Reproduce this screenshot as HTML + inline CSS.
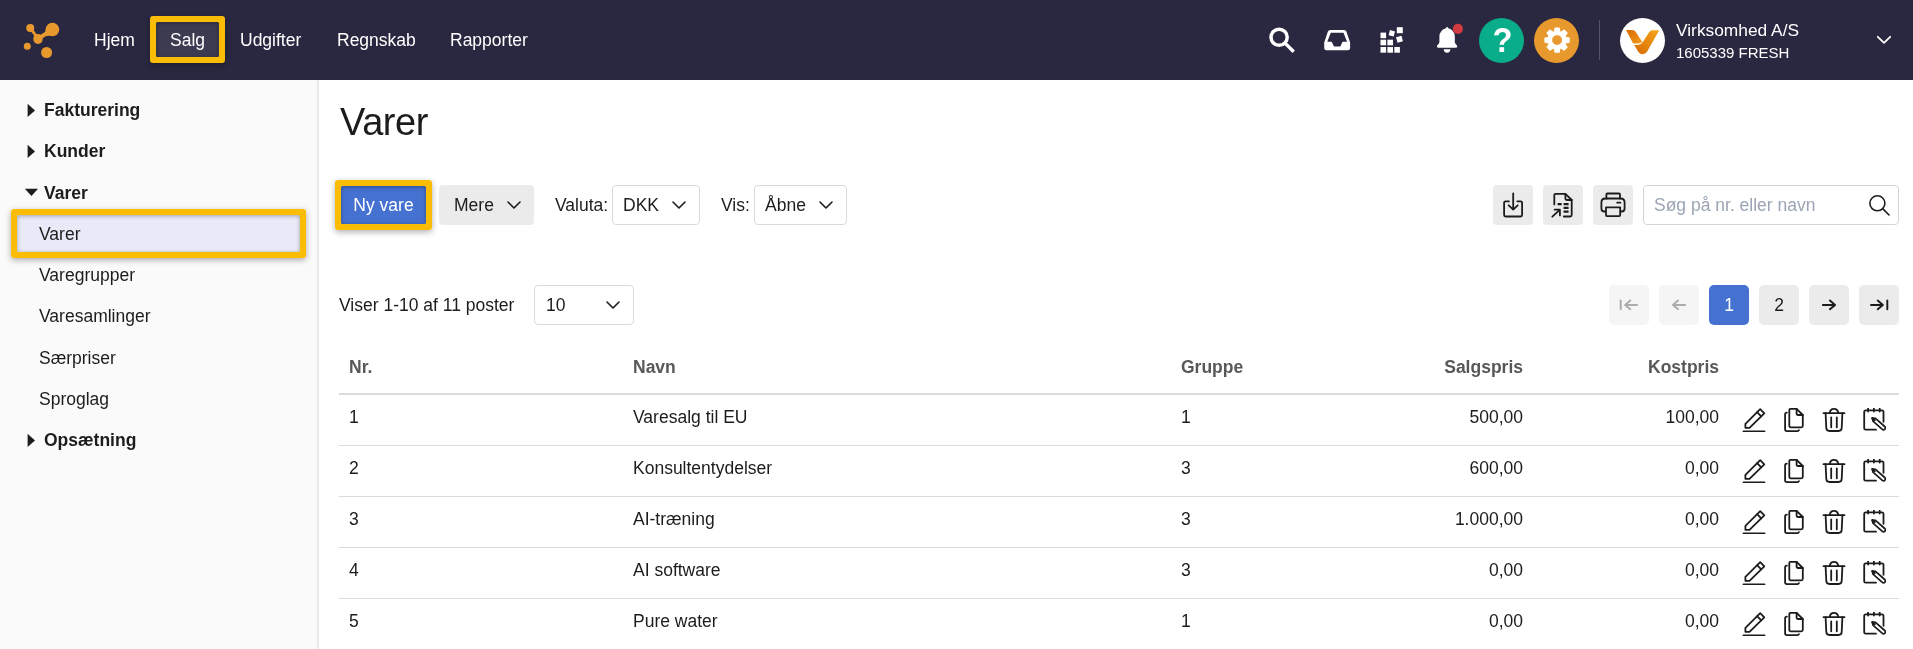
<!DOCTYPE html>
<html lang="da">
<head>
<meta charset="utf-8">
<title>Varer</title>
<style>
*{box-sizing:border-box;margin:0;padding:0}
html,body{width:1913px;height:649px;overflow:hidden;background:#fff}
body{font-family:"Liberation Sans",Arial,sans-serif;font-size:17.5px;color:#1c1c1c;position:relative}
.abs{position:absolute}
#nav{position:absolute;left:0;top:0;width:1913px;height:80px;background:#2a2840}
.navt{position:absolute;top:0;height:80px;line-height:80px;color:#fff;font-size:17.5px;white-space:nowrap}
.hl{position:absolute;border:6px solid #fbbc05;border-radius:5px;box-shadow:0 3px 8px rgba(0,0,0,.35), inset 0 1px 5px rgba(0,0,0,.3)}
#side{position:absolute;left:0;top:80px;width:319px;height:569px;background:#fafafa;border-right:2px solid #e9e9e9}
.sh{position:absolute;left:44px;font-weight:bold;font-size:17.5px;line-height:20px;white-space:nowrap}
.si{position:absolute;left:39px;font-size:17.5px;line-height:20px;white-space:nowrap}
.tri{position:absolute;width:0;height:0}
.tri.r{border-left:8px solid #1c1c1c;border-top:6.25px solid transparent;border-bottom:6.25px solid transparent}
.tri.d{border-top:7.2px solid #1c1c1c;border-left:6.7px solid transparent;border-right:6.7px solid transparent}
h1{position:absolute;left:340px;top:100px;letter-spacing:-0.4px;font-size:38px;font-weight:normal;line-height:44px}
.btn{position:absolute;height:40px;border-radius:4px;background:#ebebeb;line-height:40px;font-size:17.5px;white-space:nowrap}
.sel{position:absolute;height:40px;border-radius:4px;background:#fff;border:1px solid #d9d9d9;line-height:38px;font-size:17.5px;white-space:nowrap}
.lbl{position:absolute;line-height:40px;font-size:17.5px;white-space:nowrap}
.chev{position:absolute;width:14px;height:8px}
table{position:absolute;left:339px;top:343px;width:1560px;border-collapse:collapse;table-layout:fixed}
th{height:51px;text-align:left;font-size:17.5px;color:#585858;font-weight:bold;padding:0 10px 1px;border-bottom:2px solid #dcdcdc}
td{height:51px;font-size:17.5px;padding:0 10px 4px;border-bottom:1px solid #dcdcdc;white-space:nowrap}
.r{text-align:right}
.ic{position:absolute;width:24px;height:24px}
</style>
</head>
<body>
<div id="root" style="position:absolute;left:0;top:0;width:1913px;height:649px;will-change:transform">

<svg width="0" height="0" style="position:absolute">
<defs>
<symbol id="i-edit" viewBox="0 0 24 24"><g fill="none" stroke="#1c1c1c" stroke-width="1.800" stroke-linejoin="round" stroke-linecap="round">
<path d="M3.400 15.800 L18.200 1.200 L22.300 5.300 L7.500 19.800 H3.400 Z"/><path d="M15.100 4.200 L19.200 8.300"/><path d="M1.500 23.400 H22.500"/></g></symbol>
<symbol id="i-copy" viewBox="0 0 24 24"><g fill="none" stroke="#1c1c1c" stroke-width="1.800" stroke-linejoin="round" stroke-linecap="round">
<path d="M8.800 0.800 H14.600 L20.800 7 V17.800 Q20.800 19.300 19.300 19.300 H8.800 Q7.300 19.300 7.300 17.800 V2.300 Q7.300 0.800 8.800 0.800 Z"/><path d="M14.600 0.800 V5.500 Q14.600 7 16.100 7 H20.800"/>
<path d="M4.900 4.600 Q3.100 4.600 3.100 6.400 V21.300 Q3.100 23.100 4.900 23.100 H15.300 Q16.700 23.100 17 22.100"/></g></symbol>
<symbol id="i-trash" viewBox="0 0 24 24"><g fill="none" stroke="#1c1c1c" stroke-width="1.800" stroke-linejoin="round" stroke-linecap="round">
<path d="M1.500 5.200 H22.500"/><path d="M7.700 5.200 Q8.200 0.900 12 0.900 Q15.800 0.900 16.300 5.200"/>
<path d="M3.600 5.200 L4.300 20 Q4.500 23 7.500 23 H16.500 Q19.500 23 19.700 20 L20.400 5.200"/><path d="M9.200 9.500 V19.300 M14.800 9.500 V19.300"/></g></symbol>
<symbol id="i-note" viewBox="0 0 24 24"><g fill="none" stroke="#1c1c1c" stroke-width="1.800" stroke-linejoin="round" stroke-linecap="round">
<path d="M21.500 13.800 V3.900 Q21.500 2.400 20 2.400 H3.700 Q2.200 2.400 2.200 3.900 V20.200 Q2.200 21.700 3.700 21.700 H14"/>
<path d="M6.100 0.500 V3.600 M11.900 0.500 V3.600 M17.700 0.500 V3.600"/>
<path d="M10.300 10.100 L13.500 10.400 L22.700 18.500 A1.800 1.800 0 0 1 20.300 21.300 L11 13.200 Z" fill="#fff" stroke-width="1.700"/><path d="M10.400 10.200 L12.500 12.100" stroke-width="2.400"/></g></symbol>
</defs>
</svg>
<div id="nav">
  <svg class="abs" style="left:20px;top:18px" width="44" height="44" viewBox="20 18 44 44">
    <g fill="#e8992e">
      <circle cx="52.400" cy="29.500" r="6.800"/><circle cx="30.250" cy="28.100" r="4"/><ellipse cx="38" cy="38.900" rx="4.700" ry="5"/>
      <circle cx="27.300" cy="46.200" r="3.500"/><circle cx="46.600" cy="52.500" r="5.500"/>
      <path d="M30.250 28.100 L38 38.300" stroke="#e8992e" stroke-width="2.800" fill="none"/>
      <path d="M38 38.200 L52 30" stroke="#e8992e" stroke-width="3.600" fill="none"/>
      <path d="M33.400 33.800 Q36 35.500 40.500 35 L38 38 Z"/><path d="M41.500 35.300 L44 33.600 Q45.600 32 45.700 29.500 L50 35.900 Q46 35.400 42.800 38.300 Z"/>
    </g>
  </svg>
  <div class="navt" style="left:94px">Hjem</div>
  <div class="abs" style="left:156px;top:22px;width:63px;height:35px;background:#3d3b52;border-radius:3px"></div>
  <div class="navt" style="left:170px">Salg</div>
  <div class="abs" style="left:150px;top:16px;width:75px;height:47px"><div class="abs" style="left:0;top:0;width:75px;height:47px;border-radius:3px;box-shadow:0 2px 6px rgba(0,0,0,.32)"></div><div class="abs" style="left:6px;top:6px;width:63px;height:35px;border-radius:1.6px;box-shadow:inset 0 1px 4px rgba(0,0,0,.32)"></div><svg class="abs" style="left:0;top:0" width="75" height="47" viewBox="0 0 75 47"><path fill="#fbbc05" fill-rule="evenodd" d="M3 0 H72 A3 3 0 0 1 75 3 V44 A3 3 0 0 1 72 47 H3 A3 3 0 0 1 0 44 V3 A3 3 0 0 1 3 0 Z M7.6 6 H67.4 A1.6 1.6 0 0 1 69 7.6 V39.4 A1.6 1.6 0 0 1 67.4 41 H7.6 A1.6 1.6 0 0 1 6 39.4 V7.6 A1.6 1.6 0 0 1 7.6 6 Z"/></svg></div>
  <div class="navt" style="left:240px">Udgifter</div>
  <div class="navt" style="left:337px">Regnskab</div>
  <div class="navt" style="left:450px">Rapporter</div>

  <!-- search -->
  <svg class="abs" style="left:1266px;top:24px" width="32" height="32" viewBox="0 0 32 32" fill="none" stroke="#fff" stroke-width="3" stroke-linecap="round">
    <circle cx="13.100" cy="13.250" r="8.100" stroke-width="3.500"/><path d="M19.300 19.400 L27.700 27.800" stroke-width="3.400" stroke-linecap="butt"/>
  </svg>
  <!-- inbox -->
  <svg class="abs" style="left:1322px;top:27px" width="30" height="26" viewBox="0 0 30 26">
    <path d="M8.300 2.900 H22 Q23.800 2.900 24.400 4.500 L28.100 15.500 V21 Q28.100 23.200 25.900 23.200 H4.400 Q2.200 23.200 2.200 21 V15.500 L5.900 4.500 Q6.500 2.900 8.300 2.900 Z M8.800 5.700 L5.300 14.700 H9.700 L12 19.500 H18.300 L20.600 14.700 H25 L21.500 5.700 Z" fill="#fff" fill-rule="evenodd"/>
  </svg>
  <!-- grid -->
  <svg class="abs" style="left:1379px;top:26px" width="26" height="28" viewBox="0 0 26 28" fill="#fff">
    <rect x="1.500" y="6.600" width="5.600" height="5.600"/><rect x="1.500" y="13.700" width="5.600" height="5.600"/><rect x="1.500" y="21" width="5.600" height="5.700"/>
    <rect x="8.400" y="13.700" width="5.600" height="5.600"/><rect x="8.400" y="21" width="5.600" height="5.700"/><rect x="15.300" y="21" width="5.600" height="5.700"/>
    <rect x="17.800" y="1.200" width="6" height="6"/>
    <rect x="10.200" y="4.700" width="5.200" height="5.200" transform="rotate(15 12.800 7.300)"/>
    <rect x="17.700" y="10.500" width="5.600" height="5.600" transform="rotate(-15 20.500 13.300)"/>
  </svg>
  <!-- bell -->
  <svg class="abs" style="left:1434px;top:22px" width="34" height="34" viewBox="0 0 34 34">
    <path d="M13.100 4.800 L14.800 6.600 Q17.500 7.300 19.100 9.500 Q20.800 11.600 20.800 14.200 V20.300 Q20.900 21.800 23.200 23.700 Q23.700 25.700 21.800 25.700 H4.400 Q2.500 25.700 3 23.700 Q5.300 21.800 5.400 20.300 V14.200 Q5.400 11.600 7.100 9.500 Q8.700 7.300 11.400 6.600 Z M9.600 27.200 H16.500 Q15.900 30.800 13.050 30.800 Q10.200 30.800 9.600 27.200 Z" fill="#fff"/>
    <circle cx="23.900" cy="6.900" r="5.050" fill="#d23c40"/>
  </svg>
  <!-- help -->
  <div class="abs" style="left:1479px;top:18px;width:45px;height:45px;border-radius:50%;background:#0aad8a;color:#fff;font-weight:bold;font-size:35.500px;line-height:44px;text-align:center"><span style="display:inline-block;transform:translateX(0.700px) scaleX(0.920)">?</span></div>
  <!-- settings -->
  <div class="abs" style="left:1534px;top:18px;width:45px;height:45px;border-radius:50%;background:#e8992e"></div>
  <svg class="abs" style="left:1543px;top:27px" width="27" height="27" viewBox="-14.100 -13.100 27 27">
    <g fill="#fff">
      <g id="t"><path d="M-2.100 -12.700 H2.100 Q2.500 -12.700 2.600 -12.300 L3.300 -8.500 H-3.300 L-2.600 -12.300 Q-2.500 -12.700 -2.100 -12.700 Z"/></g>
      <use href="#t" transform="rotate(45)"/><use href="#t" transform="rotate(90)"/><use href="#t" transform="rotate(135)"/>
      <use href="#t" transform="rotate(180)"/><use href="#t" transform="rotate(225)"/><use href="#t" transform="rotate(270)"/><use href="#t" transform="rotate(315)"/>
    </g>
    <circle r="7.200" fill="none" stroke="#fff" stroke-width="4.500"/>
  </svg>
  <div class="abs" style="left:1599px;top:20px;width:1px;height:40px;background:#55536a"></div>
  <!-- avatar -->
  <div class="abs" style="left:1620px;top:18px;width:45px;height:45px;border-radius:50%;background:#fff"></div>
  <svg class="abs" style="left:1620px;top:18px" width="45" height="45" viewBox="0 0 45 45">
    <defs><linearGradient id="g1" x1="0" y1="0" x2="1" y2="1"><stop offset="0" stop-color="#d96a00"/><stop offset="1" stop-color="#f39a1a"/></linearGradient>
    <linearGradient id="g2" x1="1" y1="0" x2="0" y2="1"><stop offset="0" stop-color="#f7a51c"/><stop offset="1" stop-color="#d66a00"/></linearGradient></defs>
    <path d="M6 12 H12.500 Q14.500 12 15.600 13.800 L22.300 24 Q19 26.300 13 25.300 Z" fill="url(#g1)"/>
    <path d="M39.300 12.200 H32.500 Q30.500 12.200 29.300 14 L23.200 23.500 Q20.500 28 14 26.800 L18.600 34.300 Q20 36.200 22.700 36.200 Q25.500 36.200 27 33.800 Z" fill="url(#g2)"/>
  </svg>
  <div class="abs" style="left:1676px;top:20px;color:#fff;font-size:17.350px;line-height:20px;white-space:nowrap">Virksomhed A/S</div>
  <div class="abs" style="left:1676px;top:44px;color:#fff;font-size:15px;line-height:18px;white-space:nowrap">1605339 FRESH</div>
  <svg class="abs" style="left:1875px;top:34px" width="18" height="12" viewBox="0 0 18 12" fill="none" stroke="#fff" stroke-width="1.800" stroke-linecap="round" stroke-linejoin="round"><path d="M2.800 2.800 L9 8.800 L15.200 2.800"/></svg>
</div>

<div id="side">
  <svg class="abs" style="left:27px;top:23px" width="10" height="15" viewBox="0 0 10 15"><path d="M0.600 0.800 L8 7.400 L0.600 14 Z" fill="#1c1c1c"/></svg><div class="sh" style="top:20px">Fakturering</div>
  <svg class="abs" style="left:27px;top:64px" width="10" height="15" viewBox="0 0 10 15"><path d="M0.600 0.800 L8 7.400 L0.600 14 Z" fill="#1c1c1c"/></svg><div class="sh" style="top:61px">Kunder</div>
  <svg class="abs" style="left:24px;top:108px" width="15" height="9" viewBox="0 0 15 9"><path d="M0.850 0.700 H14.050 L7.450 8 Z" fill="#1c1c1c"/></svg><div class="sh" style="top:103px">Varer</div>
  <div class="abs" style="left:17px;top:135px;width:283px;height:37px;background:#e8ebf7"></div>
  <div class="si" style="top:144px">Varer</div>
  <div class="si" style="top:185px">Varegrupper</div>
  <div class="si" style="top:226px">Varesamlinger</div>
  <div class="si" style="top:268px">Særpriser</div>
  <div class="si" style="top:309px">Sproglag</div>
  <svg class="abs" style="left:27px;top:353px" width="10" height="15" viewBox="0 0 10 15"><path d="M0.600 0.800 L8 7.400 L0.600 14 Z" fill="#1c1c1c"/></svg><div class="sh" style="top:350px">Opsætning</div>
</div>
<div class="abs" style="left:11px;top:209px;width:295px;height:49px"><div class="abs" style="left:0;top:0;width:295px;height:49px;border-radius:3px;box-shadow:0 2px 6px rgba(0,0,0,.32)"></div><div class="abs" style="left:6px;top:6px;width:283px;height:37px;border-radius:1.6px;box-shadow:inset 0 1px 4px rgba(0,0,0,.32)"></div><svg class="abs" style="left:0;top:0" width="295" height="49" viewBox="0 0 295 49"><path fill="#fbbc05" fill-rule="evenodd" d="M3 0 H292 A3 3 0 0 1 295 3 V46 A3 3 0 0 1 292 49 H3 A3 3 0 0 1 0 46 V3 A3 3 0 0 1 3 0 Z M7.6 6 H287.4 A1.6 1.6 0 0 1 289 7.6 V41.4 A1.6 1.6 0 0 1 287.4 43 H7.6 A1.6 1.6 0 0 1 6 41.4 V7.6 A1.6 1.6 0 0 1 7.6 6 Z"/></svg></div>

<h1>Varer</h1>

<div class="btn" style="left:340px;top:185px;width:87px;background:#4571d1;color:#fff;text-align:center">Ny vare</div>
<div class="abs" style="left:335px;top:180px;width:97px;height:50px"><div class="abs" style="left:0;top:0;width:97px;height:50px;border-radius:3px;box-shadow:0 2px 6px rgba(0,0,0,.32)"></div><div class="abs" style="left:6px;top:6px;width:85px;height:38px;border-radius:1.6px;box-shadow:inset 0 1px 4px rgba(0,0,0,.32)"></div><svg class="abs" style="left:0;top:0" width="97" height="50" viewBox="0 0 97 50"><path fill="#fbbc05" fill-rule="evenodd" d="M3 0 H94 A3 3 0 0 1 97 3 V47 A3 3 0 0 1 94 50 H3 A3 3 0 0 1 0 47 V3 A3 3 0 0 1 3 0 Z M7.6 6 H89.4 A1.6 1.6 0 0 1 91 7.6 V42.4 A1.6 1.6 0 0 1 89.4 44 H7.6 A1.6 1.6 0 0 1 6 42.4 V7.6 A1.6 1.6 0 0 1 7.6 6 Z"/></svg></div>
<div class="btn" style="left:439px;top:185px;width:95px;padding-left:15px">Mere</div>
<svg class="chev" style="left:507px;top:201px" viewBox="0 0 14 8" fill="none" stroke="#1c1c1c" stroke-width="1.600" stroke-linecap="round" stroke-linejoin="round"><path d="M1 1 L7 7 L13 1"/></svg>
<div class="lbl" style="left:555px;top:185px">Valuta:</div>
<div class="sel" style="left:612px;top:185px;width:88px;padding-left:10px">DKK</div>
<svg class="chev" style="left:672px;top:201px" viewBox="0 0 14 8" fill="none" stroke="#1c1c1c" stroke-width="1.600" stroke-linecap="round" stroke-linejoin="round"><path d="M1 1 L7 7 L13 1"/></svg>
<div class="lbl" style="left:721px;top:185px">Vis:</div>
<div class="sel" style="left:754px;top:185px;width:93px;padding-left:10px">Åbne</div>
<svg class="chev" style="left:819px;top:201px" viewBox="0 0 14 8" fill="none" stroke="#1c1c1c" stroke-width="1.600" stroke-linecap="round" stroke-linejoin="round"><path d="M1 1 L7 7 L13 1"/></svg>

<div class="btn" style="left:1493px;top:185px;width:40px"></div>
<div class="btn" style="left:1543px;top:185px;width:40px"></div>
<div class="btn" style="left:1593px;top:185px;width:40px"></div>
<div class="sel" style="left:1643px;top:185px;width:256px;padding-left:10px;border-color:#d2d6dc;color:#9ba4b4">Søg på nr. eller navn</div>


<svg class="abs" style="left:1493px;top:185px" width="40" height="40" viewBox="0 0 40 40" fill="none" stroke="#1c1c1c" stroke-width="1.800" stroke-linejoin="round" stroke-linecap="round">
<path d="M16 16.300 H12.600 Q11.100 16.300 11.100 17.800 V30 Q11.100 31.500 12.600 31.500 H27.600 Q29.100 31.500 29.100 30 V17.800 Q29.100 16.300 27.600 16.300 H24.300"/>
<path d="M20.200 8.300 V24.300 M15.700 20.300 L20.200 24.600 L24.700 20.300"/></svg>
<svg class="abs" style="left:1543px;top:185px" width="40" height="40" viewBox="0 0 40 40" fill="none" stroke="#1c1c1c" stroke-width="1.800" stroke-linejoin="round" stroke-linecap="round">
<path d="M11.300 19.400 V10.300 Q11.300 8.800 12.800 8.800 H22.400 L28.700 15 V30 Q28.700 31.500 27.200 31.500 H20.800"/>
<path d="M22.400 8.800 V13.500 Q22.400 15 23.900 15 H28.700"/>
<path d="M14.600 19.200 H18.700 M20.600 19.200 H25.600 M20.600 22.900 H25.600 M20.600 26.600 H25.600" stroke-linecap="butt" stroke-width="2.200"/>
<path d="M9.300 31.700 L16.800 24.800 M11.600 24.700 H16.900 V30.400"/></svg>
<svg class="abs" style="left:1593px;top:185px" width="40" height="40" viewBox="0 0 40 40" fill="none" stroke="#1c1c1c" stroke-width="1.800" stroke-linejoin="round" stroke-linecap="round">
<path d="M12.500 26.500 H11.400 Q8.400 26.500 8.400 23.500 V17.500 Q8.400 13.500 12.400 13.500 H27.600 Q31.600 13.500 31.600 17.500 V23.500 Q31.600 26.500 28.600 26.500 H27.500"/>
<path d="M13.400 13.500 V9.500 Q13.400 8.500 14.400 8.500 H26 Q27 8.500 27 9.500 V13.500"/>
<path d="M13 22.300 H27.200 V30.100 Q27.200 31.100 26.200 31.100 H14 Q13 31.100 13 30.100 Z"/>
<path d="M24.200 17.700 H27.400"/></svg>
<svg class="abs" style="left:1863px;top:189px" width="32" height="32" viewBox="0 0 32 32" fill="none" stroke="#1c1c1c" stroke-width="1.600" stroke-linecap="round">
<circle cx="14.400" cy="14.300" r="7.500"/><path d="M19.700 19.600 L26 26"/></svg>
<div class="lbl" style="left:339px;top:285px">Viser 1-10 af 11 poster</div>
<div class="sel" style="left:534px;top:285px;width:100px;padding-left:11px">10</div>
<svg class="chev" style="left:606px;top:301px" viewBox="0 0 14 8" fill="none" stroke="#1c1c1c" stroke-width="1.600" stroke-linecap="round" stroke-linejoin="round"><path d="M1 1 L7 7 L13 1"/></svg>

<div class="btn" style="left:1609px;top:285px;width:40px;border-radius:5px;background:#f5f5f5"></div>
<div class="btn" style="left:1659px;top:285px;width:40px;border-radius:5px;background:#f5f5f5"></div>
<div class="btn" style="left:1709px;top:285px;width:40px;border-radius:5px;background:#4571d1;color:#fff;text-align:center">1</div>
<div class="btn" style="left:1759px;top:285px;width:40px;border-radius:5px;text-align:center">2</div>
<div class="btn" style="left:1809px;top:285px;width:40px;border-radius:5px"></div>
<div class="btn" style="left:1859px;top:285px;width:40px;border-radius:5px"></div>


<svg class="abs" style="left:1609px;top:285px" width="40" height="40" viewBox="0 0 40 40" fill="none" stroke="#acacac" stroke-width="2" stroke-linecap="round" stroke-linejoin="round"><path d="M11.700 15.500 V24.300 M28 19.900 H16.200 M21.300 15.600 L16.100 19.900 L21.300 24.200"/></svg>
<svg class="abs" style="left:1659px;top:285px" width="40" height="40" viewBox="0 0 40 40" fill="none" stroke="#acacac" stroke-width="2" stroke-linecap="round" stroke-linejoin="round"><path d="M26.100 19.900 H14 M19.100 15.600 L13.900 19.900 L19.100 24.200"/></svg>
<svg class="abs" style="left:1809px;top:285px" width="40" height="40" viewBox="0 0 40 40" fill="none" stroke="#1c1c1c" stroke-width="1.950" stroke-linecap="round" stroke-linejoin="round"><path d="M13.900 19.900 H26 M20.900 15.600 L26.100 19.900 L20.900 24.200"/></svg>
<svg class="abs" style="left:1859px;top:285px" width="40" height="40" viewBox="0 0 40 40" fill="none" stroke="#1c1c1c" stroke-width="1.950" stroke-linecap="round" stroke-linejoin="round"><path d="M28.300 15.500 V24.300 M12 19.900 H23.800 M18.700 15.600 L23.900 19.900 L18.700 24.200"/></svg>
<table>
<colgroup><col style="width:284px"><col style="width:548px"><col style="width:162px"><col style="width:200px"><col style="width:196px"><col style="width:170px"></colgroup>
<thead><tr><th>Nr.</th><th>Navn</th><th>Gruppe</th><th class="r">Salgspris</th><th class="r">Kostpris</th><th></th></tr></thead>
<tbody>
<tr><td>1</td><td>Varesalg til EU</td><td>1</td><td class="r">500,00</td><td class="r">100,00</td><td></td></tr>
<tr><td>2</td><td>Konsultentydelser</td><td>3</td><td class="r">600,00</td><td class="r">0,00</td><td></td></tr>
<tr><td>3</td><td>AI-træning</td><td>3</td><td class="r">1.000,00</td><td class="r">0,00</td><td></td></tr>
<tr><td>4</td><td>AI software</td><td>3</td><td class="r">0,00</td><td class="r">0,00</td><td></td></tr>
<tr><td>5</td><td>Pure water</td><td>1</td><td class="r">0,00</td><td class="r">0,00</td><td></td></tr>
</tbody>
</table>
<svg class="ic" style="left:1742px;top:408px"><use href="#i-edit"/></svg>
<svg class="ic" style="left:1782px;top:408px"><use href="#i-copy"/></svg>
<svg class="ic" style="left:1822px;top:408px"><use href="#i-trash"/></svg>
<svg class="ic" style="left:1862px;top:408px"><use href="#i-note"/></svg>
<svg class="ic" style="left:1742px;top:459px"><use href="#i-edit"/></svg>
<svg class="ic" style="left:1782px;top:459px"><use href="#i-copy"/></svg>
<svg class="ic" style="left:1822px;top:459px"><use href="#i-trash"/></svg>
<svg class="ic" style="left:1862px;top:459px"><use href="#i-note"/></svg>
<svg class="ic" style="left:1742px;top:510px"><use href="#i-edit"/></svg>
<svg class="ic" style="left:1782px;top:510px"><use href="#i-copy"/></svg>
<svg class="ic" style="left:1822px;top:510px"><use href="#i-trash"/></svg>
<svg class="ic" style="left:1862px;top:510px"><use href="#i-note"/></svg>
<svg class="ic" style="left:1742px;top:561px"><use href="#i-edit"/></svg>
<svg class="ic" style="left:1782px;top:561px"><use href="#i-copy"/></svg>
<svg class="ic" style="left:1822px;top:561px"><use href="#i-trash"/></svg>
<svg class="ic" style="left:1862px;top:561px"><use href="#i-note"/></svg>
<svg class="ic" style="left:1742px;top:612px"><use href="#i-edit"/></svg>
<svg class="ic" style="left:1782px;top:612px"><use href="#i-copy"/></svg>
<svg class="ic" style="left:1822px;top:612px"><use href="#i-trash"/></svg>
<svg class="ic" style="left:1862px;top:612px"><use href="#i-note"/></svg>
</div>
</body>
</html>
